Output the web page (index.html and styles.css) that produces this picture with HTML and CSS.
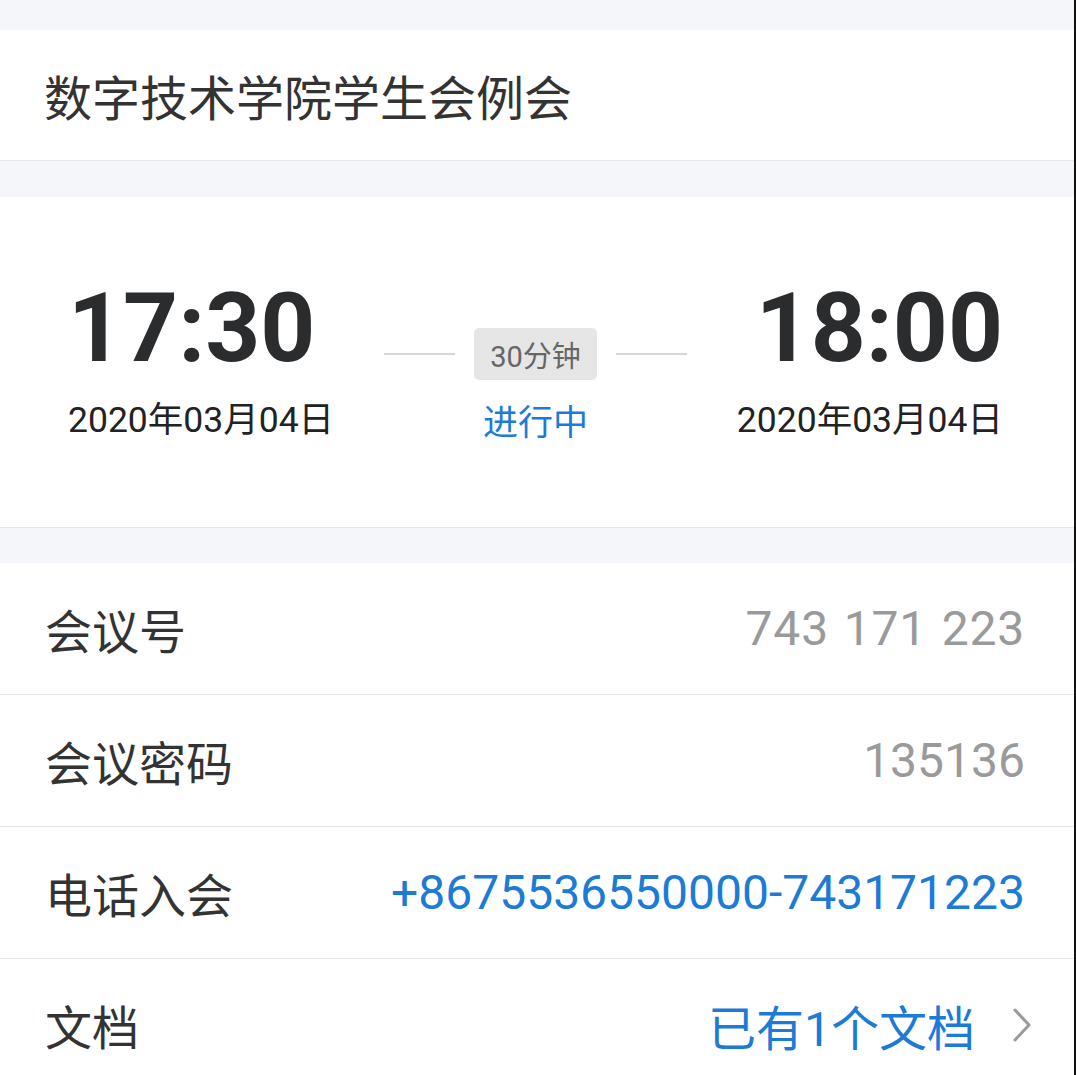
FILE: index.html
```html
<!DOCTYPE html>
<html lang="zh-CN">
<head>
    <meta charset="utf-8">
    <title>会议详情</title>
    <link rel="stylesheet" href="styles.css">
</head>
<body>
    <div class="page">
        <div class="gap gap-top"></div>

        <div class="title-card">
            <span class="title">数字技术学院学生会例会</span>
        </div>

        <div class="gap"></div>

        <div class="time-card">
            <div class="time-block start">
                <div class="clock">17:30</div>
                <div class="date">2020年03月04日</div>
            </div>
            <div class="duration">
                <div class="duration-row">
                    <span class="dash"></span>
                    <span class="badge">30分钟</span>
                    <span class="dash"></span>
                </div>
                <div class="status">进行中</div>
            </div>
            <div class="time-block end">
                <div class="clock">18:00</div>
                <div class="date">2020年03月04日</div>
            </div>
        </div>

        <div class="gap gap-mid"></div>

        <div class="info-list">
            <div class="info-row">
                <span class="label">会议号</span>
                <span class="value muted spaced">743 171 223</span>
            </div>
            <div class="info-row">
                <span class="label">会议密码</span>
                <span class="value muted">135136</span>
            </div>
            <div class="info-row">
                <span class="label">电话入会</span>
                <span class="value link">+8675536550000-743171223</span>
            </div>
            <div class="info-row">
                <span class="label">文档</span>
                <span class="value link">已有1个文档</span>
                <svg class="chevron" width="22" height="38" viewBox="0 0 22 38">
                    <polyline points="4,4 18,19 4,34" fill="none" stroke="#9a9a9a" stroke-width="3" stroke-linecap="round" stroke-linejoin="round"/>
                </svg>
            </div>
        </div>
    </div>
</body>
</html>
```

FILE: styles.css
```css
html, body {
    margin: 0;
    padding: 0;
    background-color: #fff;
}
body {
    font-family: Roboto, "Noto Sans CJK SC", sans-serif;
    color: #333;
}
.page {
    height: 1075px;
    overflow: hidden;
    border-right: 2px solid #111;
    box-sizing: border-box;
}
.gap {
    height: 36px;
    background-color: #f4f6f9;
}
.gap-top {
    height: 30px;
}
.gap-mid {
    height: 35px;
}

/* title */
.title-card {
    height: 130px;
    display: flex;
    align-items: center;
    padding-left: 44px;
    border-bottom: 1px solid #e6e8eb;
}
.title {
    font-family: "Noto Sans CJK SC", sans-serif;
    font-size: 48px;
    color: #333;
}

/* start / end time */
.time-card {
    height: 331px;
    box-sizing: border-box;
    display: flex;
    align-items: flex-start;
    justify-content: space-between;
    padding: 83px 71px 0 68px;
    border-bottom: 1px solid #e6e8eb;
}
.time-block {
    display: flex;
    flex-direction: column;
}
.time-block.start {
    align-items: flex-start;
}
.time-block.end {
    align-items: flex-end;
}
.clock {
    font-size: 96px;
    font-weight: 700;
    line-height: 1;
    color: #2b2c2e;
}
.date {
    margin-top: 22px;
    font-size: 35.5px;
    line-height: 44px;
    color: #222;
}
.duration {
    display: flex;
    flex-direction: column;
    align-items: center;
    padding-top: 48px;
}
.duration-row {
    display: flex;
    align-items: center;
    gap: 19px;
}
.dash {
    width: 71px;
    height: 2px;
    background-color: #d6d6d6;
}
.badge {
    height: 52px;
    padding: 0 16px;
    display: flex;
    align-items: center;
    font-size: 29px;
    color: #666;
    background-color: #e6e6e6;
    border-radius: 5px;
}
.status {
    margin-top: 18px;
    font-family: "Noto Sans CJK SC", sans-serif;
    font-size: 35px;
    line-height: 44px;
    color: #1b7bd6;
}

/* info rows */
.info-row {
    height: 132px;
    box-sizing: border-box;
    display: flex;
    align-items: center;
    padding: 0 49px 0 45px;
    border-bottom: 1px solid #e6e8eb;
}
.label {
    flex: 1;
    font-family: "Noto Sans CJK SC", sans-serif;
    font-size: 47px;
    color: #333;
}
.value {
    font-size: 48px;
}
.spaced {
    word-spacing: 2px;
    letter-spacing: 0.8px;
}
.muted {
    color: #9a9a9a;
}
.link {
    color: #1b7bd6;
}
.chevron {
    margin-left: 36px;
    margin-right: -8px;
}
```
